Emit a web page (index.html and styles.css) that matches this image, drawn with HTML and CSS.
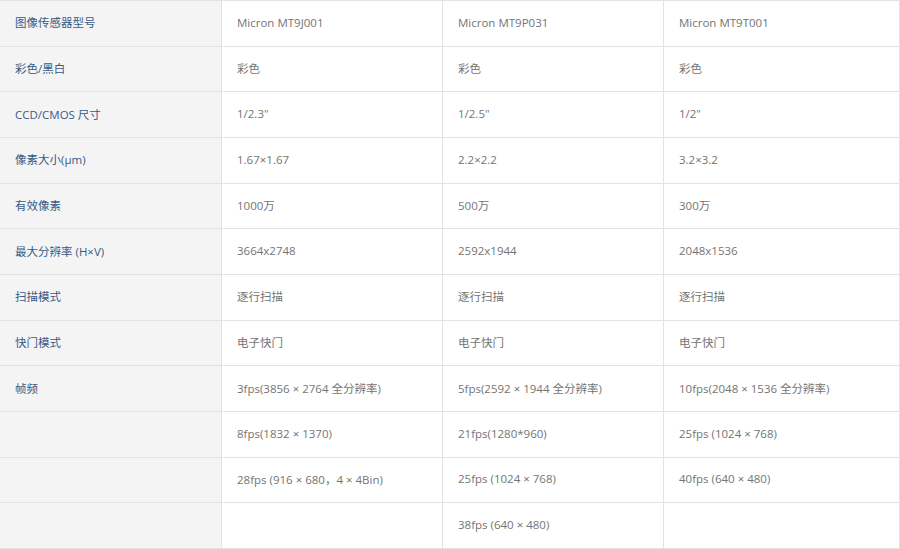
FILE: index.html
```html
<!DOCTYPE html>
<html lang="zh-CN">
<head>
<meta charset="utf-8">
<title>规格参数</title>
<link rel="stylesheet" href="styles.css">
</head>
<body>
<div class="spec">
  <div class="cell key">图像传感器型号</div><div class="cell">Micron MT9J001</div><div class="cell">Micron MT9P031</div><div class="cell">Micron MT9T001</div>
  <div class="cell key">彩色/黑白</div><div class="cell">彩色</div><div class="cell">彩色</div><div class="cell">彩色</div>
  <div class="cell key">CCD/CMOS 尺寸</div><div class="cell">1/2.3"</div><div class="cell">1/2.5"</div><div class="cell">1/2"</div>
  <div class="cell key">像素大小(μm)</div><div class="cell">1.67×1.67</div><div class="cell">2.2×2.2</div><div class="cell">3.2×3.2</div>
  <div class="cell key">有效像素</div><div class="cell">1000万</div><div class="cell">500万</div><div class="cell">300万</div>
  <div class="cell key">最大分辨率 (H×V)</div><div class="cell">3664x2748</div><div class="cell">2592x1944</div><div class="cell">2048x1536</div>
  <div class="cell key">扫描模式</div><div class="cell">逐行扫描</div><div class="cell">逐行扫描</div><div class="cell">逐行扫描</div>
  <div class="cell key">快门模式</div><div class="cell">电子快门</div><div class="cell">电子快门</div><div class="cell">电子快门</div>
  <div class="cell key">帧频</div><div class="cell">3fps(3856 × 2764 全分辨率)</div><div class="cell">5fps(2592 × 1944 全分辨率)</div><div class="cell">10fps(2048 × 1536 全分辨率)</div>
  <div class="cell key"></div><div class="cell">8fps(1832 × 1370)</div><div class="cell">21fps(1280*960)</div><div class="cell">25fps (1024 × 768)</div>
  <div class="cell key"></div><div class="cell">28fps (916 × 680，4 × 4Bin)</div><div class="cell">25fps (1024 × 768)</div><div class="cell">40fps (640 × 480)</div>
  <div class="cell key"></div><div class="cell"></div><div class="cell">38fps (640 × 480)</div><div class="cell"></div>
</div>
</body>
</html>
```
FILE: styles.css
```css
html, body {
  margin: 0;
  padding: 0;
  background: #ffffff;
}
.spec {
  width: 900px;
  height: 549px;
  box-sizing: border-box;
  border-top: 1px solid #e2e2e2;
  display: grid;
  grid-template-columns: 222px 221px 221px 1fr;
  grid-template-rows: repeat(12, 1fr);
  font-family: "Open Sans", "Noto Sans CJK SC", sans-serif;
  font-size: 11.5px;
  color: #747474;
}
.cell {
  display: flex;
  align-items: center;
  padding-left: 15px;
  padding-bottom: 2px;
  border-right: 1px solid #e2e2e2;
  border-bottom: 1px solid #e2e2e2;
  white-space: nowrap;
  overflow: hidden;
}
.key {
  background: #f4f4f4;
  color: #385a86;
}
```
